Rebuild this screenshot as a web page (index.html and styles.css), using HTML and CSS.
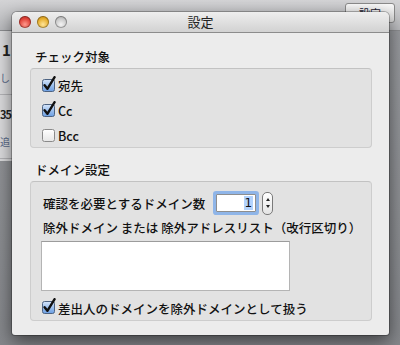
FILE: index.html
```html
<!DOCTYPE html>
<html lang="ja">
<head>
    <meta charset="UTF-8">
    <title>設定</title>
    <link rel="stylesheet" href="styles.css">
</head>
<body>
    <!-- window behind the dialog -->
    <div class="back-window">
        <div class="back-toolbar">
            <span class="back-button">設定</span>
        </div>
        <div class="back-list">
            <div class="back-row"><b>1</b><span class="back-sub">し</span></div>
            <div class="back-row"><b class="small">35</b><span class="back-sub">追</span></div>
        </div>
    </div>

    <div class="dialog">
        <div class="titlebar">
            <div class="lights">
                <span class="light red"></span>
                <span class="light yellow"></span>
                <span class="light gray"></span>
            </div>
            <div class="title">設定</div>
        </div>

        <div class="content">
            <div class="group-label">チェック対象</div>
            <div class="group group-targets">
                <label class="check-row">
                    <svg class="cb" viewBox="0 0 14 16"><use href="#cb-on"/></svg>
                    <span>宛先</span>
                </label>
                <label class="check-row">
                    <svg class="cb" viewBox="0 0 14 16"><use href="#cb-on"/></svg>
                    <span>Cc</span>
                </label>
                <label class="check-row">
                    <svg class="cb" viewBox="0 0 14 16"><use href="#cb-off"/></svg>
                    <span>Bcc</span>
                </label>
            </div>

            <div class="group-label">ドメイン設定</div>
            <div class="group group-domain">
                <div class="count-row">
                    <span>確認を必要とするドメイン数</span>
                    <div class="number-field"><span class="sel">1</span></div>
                    <div class="stepper">
                        <span class="arrow up"></span>
                        <span class="arrow down"></span>
                    </div>
                </div>
                <div class="list-label">除外ドメイン または 除外アドレスリスト（改行区切り）</div>
                <div class="list-box"></div>
                <label class="check-row">
                    <svg class="cb" viewBox="0 0 14 16"><use href="#cb-on"/></svg>
                    <span>差出人のドメインを除外ドメインとして扱う</span>
                </label>
            </div>
        </div>
    </div>

    <svg width="0" height="0" class="defs">
        <defs>
            <linearGradient id="g-on" x1="0" y1="0" x2="0" y2="1">
                <stop offset="0" stop-color="#d7e6fa"/>
                <stop offset="0.5" stop-color="#9cc0ee"/>
                <stop offset="1" stop-color="#6b9ee2"/>
            </linearGradient>
            <linearGradient id="g-off" x1="0" y1="0" x2="0" y2="1">
                <stop offset="0" stop-color="#ffffff"/>
                <stop offset="1" stop-color="#e6e6e6"/>
            </linearGradient>
            <g id="cb-on">
                <rect x="0.5" y="3.5" width="12" height="12" rx="2" fill="url(#g-on)" stroke="#4d6382"/>
                <path d="M2.6 9.2 L5.4 12.8 L12.6 1.2" fill="none" stroke="#111" stroke-width="2.4" stroke-linecap="round" stroke-linejoin="round"/>
            </g>
            <g id="cb-off">
                <rect x="0.5" y="3.5" width="12" height="12" rx="2" fill="url(#g-off)" stroke="#8a8a8a"/>
            </g>
        </defs>
    </svg>
</body>
</html>
```

FILE: styles.css
```css
* {
    box-sizing: border-box;
}

body {
    margin: 0;
    width: 400px;
    height: 345px;
    overflow: hidden;
    position: relative;
    background: linear-gradient(180deg, #9a9ca0, #85878b);
    font-family: "Noto Sans CJK JP", "Noto Sans", sans-serif;
    color: #111;
}

.defs {
    position: absolute;
}

/* the app window behind */
.back-window {
    position: absolute;
    left: 0;
    top: 0;
    width: 400px;
    height: 345px;
}

.back-toolbar {
    height: 31px;
    background: linear-gradient(180deg, #d4d4d6, #b9babd);
    border-bottom: 1px solid #8d8e91;
    position: relative;
}

.back-button {
    position: absolute;
    left: 345px;
    top: 3px;
    width: 50px;
    height: 20px;
    border: 1px solid #8b8b8b;
    border-radius: 3px;
    background: linear-gradient(180deg, #fafafa, #dcdcdc);
    font-size: 11px;
    line-height: 18px;
    text-align: center;
    color: #223;
}

.back-list {
    width: 12px;
    background: #dcdcde;
    height: 130px;
    overflow: hidden;
}

.back-row {
    height: 64px;
    padding-top: 9px;
    border-bottom: 1px solid #b5b5b8;
    font-size: 15px;
    line-height: 20px;
    color: #222;
}

.back-row b {
    display: block;
    padding-left: 2px;
}

.back-row b.small {
    font-size: 11px;
    letter-spacing: -1px;
    padding-left: 0;
}

.back-sub {
    display: block;
    font-size: 10px;
    color: #5a6a8a;
    margin-top: 8px;
}

/* dialog */
.dialog {
    position: absolute;
    left: 12px;
    top: 12px;
    width: 377px;
    height: 323px;
    background: #ececec;
    border-radius: 5px 5px 3px 3px;
    box-shadow: 0 6px 18px rgba(0, 0, 0, 0.55), 0 0 0 1px rgba(0, 0, 0, 0.25);
    overflow: hidden;
}

.titlebar {
    height: 21px;
    position: relative;
    background: linear-gradient(180deg, #eeeeee, #d2d2d2);
    border-bottom: 1px solid #8c8c8c;
    display: flex;
    align-items: center;
    justify-content: center;
}

.lights {
    position: absolute;
    left: 7px;
    top: 4px;
    display: flex;
    gap: 6px;
}

.light {
    width: 12px;
    height: 12px;
    border-radius: 50%;
    box-shadow: inset 0 0 0 1px rgba(0, 0, 0, 0.3);
}

.light.red {
    background: radial-gradient(circle at 50% 70%, #ff9b8e, #e0443a 55%, #a4231b);
}

.light.yellow {
    background: radial-gradient(circle at 50% 70%, #ffe59a, #e6ae2c 55%, #a97512);
}

.light.gray {
    background: radial-gradient(circle at 50% 70%, #f4f4f4, #c9c9c9 55%, #8f8f8f);
}

.title {
    font-size: 13px;
    line-height: 20px;
    color: #222;
}

.content {
    padding: 15px 17px 0 18px;
    display: flex;
    flex-direction: column;
}

.group-label {
    font-size: 12.5px;
    font-weight: 500;
    line-height: 17px;
    padding-left: 5px;
    margin-bottom: 3px;
}

.group {
    background: #e2e2e2;
    border: 1px solid #cdcdcd;
    border-top-color: #c2c2c2;
    border-radius: 4px;
    font-size: 12.5px;
    font-weight: 500;
}

.group-targets {
    height: 80px;
    padding: 4px 11px 0;
    margin-bottom: 13px;
}

.check-row {
    display: flex;
    align-items: center;
    height: 25px;
    gap: 2px;
}

.cb {
    width: 14px;
    height: 16px;
    margin-top: -4px;
}

.group-domain {
    height: 140px;
    padding: 9px 10px 0 12px;
}

.count-row {
    display: flex;
    align-items: center;
    height: 24px;
}

.number-field {
    margin-left: 11px;
    width: 40px;
    height: 18px;
    background: #fff;
    border: 1px solid #8e8e8e;
    box-shadow: 0 0 0 3px #8fb5e8;
    border-radius: 1px;
    text-align: right;
    font-family: "DejaVu Sans", sans-serif;
    font-size: 12px;
    line-height: 16px;
    padding-right: 2px;
}

.sel {
    background: #b3d3fd;
    padding: 0 1px;
}

.stepper {
    margin-left: 6px;
    width: 11px;
    height: 23px;
    border: 1px solid #7a7a7a;
    border-radius: 5px;
    background: linear-gradient(180deg, #ffffff, #e4e4e4);
    display: flex;
    flex-direction: column;
    align-items: center;
    justify-content: center;
    gap: 4px;
}

.arrow {
    width: 0;
    height: 0;
    border-left: 2.5px solid transparent;
    border-right: 2.5px solid transparent;
}

.arrow.up {
    border-bottom: 3px solid #222;
}

.arrow.down {
    border-top: 3px solid #222;
}

.list-label {
    height: 24px;
    line-height: 24px;
    margin-top: 1px;
    white-space: nowrap;
}

.list-box {
    margin-top: 1px;
    margin-left: -2px;
    width: 249px;
    height: 50px;
    background: #fff;
    border: 1px solid #b4b4b4;
    border-top-color: #9c9c9c;
}

.group-domain .check-row {
    margin-top: 6px;
    margin-left: -1px;
    height: 22px;
}
```
